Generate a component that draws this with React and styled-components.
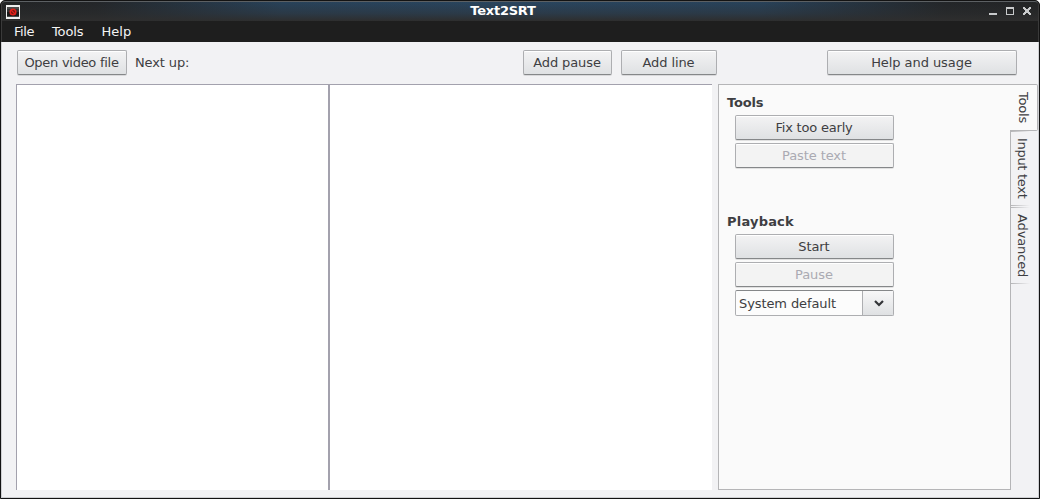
import React from "react";
import styled, { createGlobalStyle } from "styled-components";

const Global = createGlobalStyle`
  * { box-sizing: border-box; }
  html, body { margin: 0; padding: 0; background: #fff; overflow: hidden; }
  body { font: 13px/16px "DejaVu Sans", sans-serif; color: #3e3e42; }
`;

const Window = styled.div`
  width: 1040px;
  height: 499px;
  display: flex;
  flex-direction: column;
  border: 1px solid #131313;
  border-radius: 5px 5px 0 0;
  overflow: hidden;
  background: #131313;
`;

const TitleBar = styled.header`
  height: 20px;
  flex: none;
  display: grid;
  grid-template-columns: 60px 1fr 60px;
  align-items: center;
  border-top: 1px solid #5c6063;
  border-left: 1px solid #3a3a3a;
  border-right: 1px solid #3a3a3a;
  border-radius: 4px 4px 0 0;
  background:
    linear-gradient(to bottom, rgba(46, 46, 46, 0) 0%, rgba(46, 46, 46, 0.45) 60%, #2e2e2e 100%),
    linear-gradient(to right, #222425 0%, #232629 9%, #28425a 27%, #29455f 50%, #28425a 73%, #232629 91%, #222425 100%);
`;

const AppIcon = styled.svg`
  display: block;
  margin: 1px 0 0 4px;
`;

const Title = styled.h1`
  margin: 0 0 1px;
  padding-right: 34px;
  text-align: center;
  font-size: 13px;
  line-height: 16px;
  font-weight: bold;
  letter-spacing: -0.25px;
  color: #fff;
`;

const WindowControls = styled.svg`
  display: block;
`;

const MenuBar = styled.nav`
  height: 21px;
  flex: none;
  display: flex;
  align-items: center;
  gap: 18px;
  padding-left: 12px;
  border-left: 1px solid #3a3a3a;
  border-right: 1px solid #3a3a3a;
  background: #1e1e1e;
`;

const MenuItem = styled.span`
  color: #f4f4f4;
  letter-spacing: ${(p) => p.$spacing || 0}px;
`;

const Body = styled.main`
  flex: 1;
  min-height: 0;
  display: flex;
  flex-direction: column;
  padding: 8px 0 7px 14px;
  background: #f2f2f4;
  border: 1px solid #cfd0d3;
  border-top: 0;
`;

const Toolbar = styled.div`
  display: flex;
  align-items: center;
  height: 25px;
  padding: 0 21px 0 1px;
`;

const Button = styled.button`
  width: ${(p) => p.$width}px;
  height: 25px;
  flex: none;
  display: block;
  margin: 0 0 0 ${(p) => p.$left || 0}px;
  padding: 1px 1px 0 0;
  font: inherit;
  text-align: center;
  letter-spacing: ${(p) => p.$spacing || 0}px;
  color: #3e3e42;
  border: 1px solid #adaeb1;
  border-bottom-color: #858789;
  border-radius: 2px;
  background: linear-gradient(#f3f3f4, #dfe1e3);
  box-shadow: inset 0 1px #fff, 0 1px rgba(0, 0, 0, 0.1);
  &:disabled {
    color: #aaaab2;
    background: #f3f3f3;
  }
`;

const NextUp = styled.span`
  flex: 1;
  margin-left: 8px;
  letter-spacing: -0.12px;
`;

const Content = styled.div`
  flex: 1;
  min-height: 0;
  display: flex;
  margin-top: 9px;
`;

const TextPane = styled.section`
  width: ${(p) => p.$width}px;
  flex: none;
  background: #fff;
  border: solid #a3a1ad;
  border-width: 1px ${(p) => (p.$divided ? 1 : 0)}px 0 1px;
`;

const SidePanel = styled.section`
  width: 293px;
  flex: none;
  margin-left: 6px;
  padding: 10px 8px;
  border: 1px solid #b5b5b7;
  background: #fafafa;
`;

const Group = styled.div`
  display: flex;
  flex-direction: column;
  gap: 3px;
  height: 119px;
`;

const Heading = styled.h2`
  margin: 0 0 1px;
  font-size: 13px;
  line-height: 16px;
  font-weight: bold;
  letter-spacing: ${(p) => p.$spacing || 0}px;
`;

const Select = styled.div`
  width: 159px;
  height: 26px;
  margin-left: 8px;
  display: flex;
  border: 1px solid #adaeb1;
  border-top-color: #858789;
  border-radius: 2px;
  background: #fcfcfc;
`;

const SelectValue = styled.span`
  flex: 1;
  padding: 5px 0 0 3px;
  letter-spacing: -0.1px;
`;

const SelectArrow = styled.span`
  width: 31px;
  display: grid;
  place-items: center;
  padding-left: 1px;
  border-left: 1px solid #adaeb1;
  background: linear-gradient(#f7f7f8, #dfe1e3);
`;

const TabList = styled.div`
  width: 28px;
  margin-left: -1px;
  position: relative;
  display: flex;
  flex-direction: column;
`;

const Tab = styled.div`
  height: ${(p) => p.$height}px;
  writing-mode: vertical-rl;
  line-height: 16px;
  padding: ${(p) => p.$top}px 0 0;
  letter-spacing: ${(p) => p.$spacing || 0}px;
  border-left: 1px solid #b5b5b7;
  width: 20px;
  background:
    linear-gradient(to right, #b5b5b7, #f2f2f4) bottom / 100% 1px no-repeat,
    linear-gradient(to right, #b5b5b7, #f2f2f4) 0 ${(p) => p.$lineTop || 0}px / 100% 1px no-repeat;
`;

const ActiveTab = styled(Tab)`
  width: 28px;
  padding-right: 6px;
  border: 1px solid #b5b5b7;
  border-left: 0;
  border-radius: 0 2px 2px 0;
  background: #fafafa;
`;

export default function App() {
  return (
    <>
      <Global />
      <Window>
        <TitleBar>
          <AppIcon width="14" height="14" shapeRendering="crispEdges">
            <rect width="14" height="14" fill="#eee" />
            <rect x="1" y="2" width="12" height="10" fill="#4a4a4a" />
            <rect x="1" y="4" width="12" height="3" fill="#333" />
            <rect x="1" y="7" width="12" height="4" fill="#181818" />
            <circle cx="7" cy="7" r="2.8" fill="#6e1512" stroke="#e01f18" strokeWidth="1.5" shapeRendering="auto" />
            <path d="M5 5l4 4" stroke="#e01f18" strokeWidth="1.3" shapeRendering="auto" />
          </AppIcon>
          <Title>Text2SRT</Title>
          <WindowControls width="60" height="19" shapeRendering="crispEdges">
            <rect x="11" y="11" width="8" height="2" fill="#c8cacb" />
            <path
              fillRule="evenodd"
              d="M28 5h8v8h-8zM29 7v5h6V7z"
              fill="#c8cacb"
            />
            <path
              d="M45 5h2v1h1v1h2v-1h1v-1h2v2h-1v1h-1v2h1v1h1v2h-2v-1h-1v-1h-2v1h-1v1h-2v-2h1v-1h1v-2h-1v-1h-1z"
              fill="#c8cacb"
            />
          </WindowControls>
        </TitleBar>
        <MenuBar>
          <MenuItem $spacing={-0.45}>File</MenuItem>
          <MenuItem $spacing={-0.1}>Tools</MenuItem>
          <MenuItem>Help</MenuItem>
        </MenuBar>
        <Body>
          <Toolbar>
            <Button $width={110} $spacing={-0.27}>Open video file</Button>
            <NextUp>Next up:</NextUp>
            <Button $width={89} $spacing={-0.1}>Add pause</Button>
            <Button $width={96} $left={9} $spacing={-0.1}>Add line</Button>
            <Button $width={190} $left={110} $spacing={-0.06}>Help and usage</Button>
          </Toolbar>
          <Content>
            <TextPane $width={313} $divided />
            <TextPane $width={383} />
            <SidePanel>
              <Group>
                <Heading $spacing={-0.2}>Tools</Heading>
                <Button $width={159} $left={8} $spacing={-0.2}>Fix too early</Button>
                <Button $width={159} $left={8} $spacing={-0.1} disabled>Paste text</Button>
              </Group>
              <Group>
                <Heading $spacing={0.2}>Playback</Heading>
                <Button $width={159} $left={8} $spacing={-0.1}>Start</Button>
                <Button $width={159} $left={8} disabled>Pause</Button>
                <Select>
                  <SelectValue>System default</SelectValue>
                  <SelectArrow>
                    <svg width="10" height="7">
                      <path d="M1 1l4 4 4-4" fill="none" stroke="#333538" strokeWidth="2.2" />
                    </svg>
                  </SelectArrow>
                </Select>
              </Group>
            </SidePanel>
            <TabList>
              <ActiveTab $height={47} $top={7} $spacing={-0.2}>Tools</ActiveTab>
              <Tab $height={75} $top={7} $spacing={-0.3}>Input text</Tab>
              <Tab $height={78} $top={8} $spacing={-0.12} $lineTop={1}>Advanced</Tab>
            </TabList>
          </Content>
        </Body>
      </Window>
    </>
  );
}
